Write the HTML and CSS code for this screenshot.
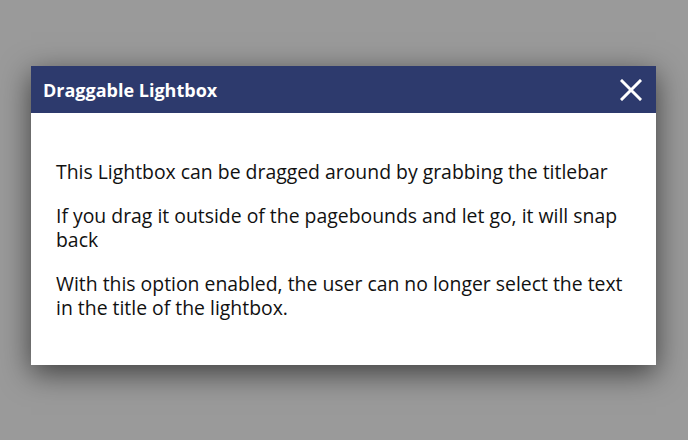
FILE: index.html
```html
<!DOCTYPE html>
<html>
<head>
<meta charset="utf-8">
<link rel="stylesheet" href="styles.css">
</head>
<body>
<div class="page">
  <div class="lightbox">
    <div class="titlebar">
      <span class="title">Draggable Lightbox</span>
      <button class="close" aria-label="Close">
        <svg width="22" height="22" viewBox="0 0 22 22"><path d="M2 2 L20 20 M20 2 L2 20" stroke="#fff" stroke-width="3" stroke-linecap="square"/></svg>
      </button>
    </div>
    <div class="content">
      <p>This Lightbox can be dragged around by grabbing the titlebar</p>
      <p>If you drag it outside of the pagebounds and let go, it will snap back</p>
      <p>With this option enabled, the user can no longer select the text in the title of the lightbox.</p>
    </div>
  </div>
</div>
</body>
</html>
```

FILE: styles.css
```css
html, body {
  margin: 0;
  padding: 0;
  background: #9a9a9a;
  height: 100%;
}
.page {
  display: flex;
  justify-content: center;
  padding-top: 66px;
  padding-left: 31px;
  padding-right: 32px;
}
.lightbox {
  width: 625px;
  background: #fff;
  box-shadow: 0 8px 28px rgba(0,0,0,0.6);
  font-family: "Open Sans", sans-serif;
}
.titlebar {
  height: 47px;
  background: #2d3a6d;
  display: flex;
  align-items: center;
  justify-content: space-between;
  padding: 0 14px 0 12px;
}
.title {
  color: #fff;
  font-weight: bold;
  font-size: 18px;
}
.close {
  background: none;
  border: 0;
  padding: 0;
  width: 22px;
  height: 22px;
  display: block;
}
.close svg { display: block; }
.content {
  padding: 27px 25px 25px;
  color: #111;
  font-size: 19.4px;
  line-height: 24px;
}
.content p {
  margin: 20px 0;
}
```
